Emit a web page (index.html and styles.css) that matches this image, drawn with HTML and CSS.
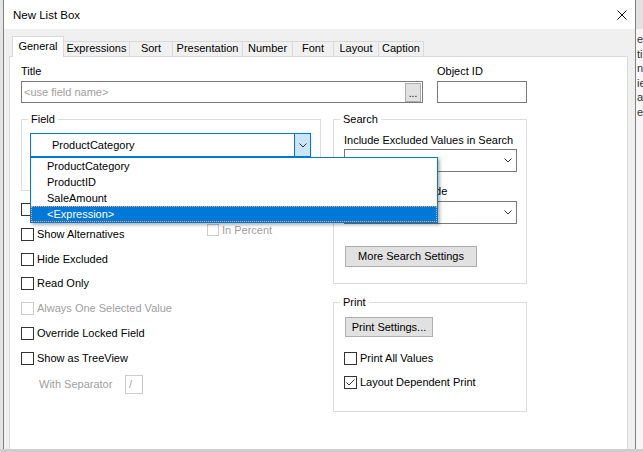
FILE: index.html
```html
<!DOCTYPE html>
<html>
<head>
<meta charset="utf-8">
<title>New List Box</title>
<link rel="stylesheet" href="styles.css">
</head>
<body>
<div class="screen">
  <div class="desk">
    <div class="edge-left"></div>
    <div class="dialog">
      <div class="titlebar">
        <span class="title">New List Box</span>
        <svg class="close" width="10" height="10" viewBox="0 0 10 10"><path d="M0.5 0.5L9.5 9.5M9.5 0.5L0.5 9.5" stroke="#111" stroke-width="1" fill="none"/></svg>
      </div>
      <div class="tabs">
        <div class="tab active t-general">General</div>
        <div class="tab t-expr">Expressions</div>
        <div class="tab t-sort">Sort</div>
        <div class="tab t-pres">Presentation</div>
        <div class="tab t-num">Number</div>
        <div class="tab t-font">Font</div>
        <div class="tab t-layout">Layout</div>
        <div class="tab t-caption">Caption</div>
      </div>
      <div class="panel">
        <div class="row-top">
          <div class="title-block">
            <div class="label">Title</div>
            <div class="input title-input">
              <span class="placeholder">&lt;use field name&gt;</span>
              <span class="dots">...</span>
            </div>
          </div>
          <div class="objid-block">
            <div class="label">Object ID</div>
            <div class="input"></div>
          </div>
        </div>
        <div class="row-main">
          <div class="col-left">
            <fieldset class="group field-group">
              <legend class="legend-field">Field</legend>
              <div class="combo combo-open">
                <span class="combo-text">ProductCategory</span>
                <span class="combo-btn"><svg width="8" height="5" viewBox="0 0 8 5"><path d="M0.5 0.5L4 4L7.5 0.5" stroke="#333" fill="none"/></svg></span>
                <div class="droplist">
                  <div class="item">ProductCategory</div>
                  <div class="item">ProductID</div>
                  <div class="item">SaleAmount</div>
                  <div class="item selected">&lt;Expression&gt;</div>
                </div>
              </div>
            </fieldset>
            <div class="checks">
              <div class="chk"><span class="box"></span><span>Show Frequency</span></div>
              <div class="chk-alt">
                <div class="chk-main"><span class="box"></span><span>Show Alternatives</span></div>
                <div class="chk-pct disabled"><span class="box"></span><span>In Percent</span></div>
              </div>
              <div class="chk"><span class="box"></span><span>Hide Excluded</span></div>
              <div class="chk"><span class="box"></span><span>Read Only</span></div>
              <div class="chk disabled"><span class="box"></span><span>Always One Selected Value</span></div>
              <div class="chk"><span class="box"></span><span>Override Locked Field</span></div>
              <div class="chk"><span class="box"></span><span>Show as TreeView</span></div>
              <div class="sep-row disabled">
                <span class="sep-label">With Separator</span>
                <span class="sep-input">/</span>
              </div>
            </div>
          </div>
          <div class="col-right">
            <fieldset class="group search-group">
              <legend class="legend-right">Search</legend>
              <div class="label">Include Excluded Values in Search</div>
              <div class="combo combo-plain c1">
                <span class="combo-text">Use Default</span>
                <span class="combo-btn"><svg width="8" height="5" viewBox="0 0 8 5"><path d="M0.5 0.5L4 4L7.5 0.5" stroke="#333" fill="none"/></svg></span>
              </div>
              <div class="label l2">Default Search Mode</div>
              <div class="combo combo-plain c2">
                <span class="combo-text">Use Default</span>
                <span class="combo-btn"><svg width="8" height="5" viewBox="0 0 8 5"><path d="M0.5 0.5L4 4L7.5 0.5" stroke="#333" fill="none"/></svg></span>
              </div>
              <div class="button btn-more">More Search Settings</div>
            </fieldset>
            <fieldset class="group print-group">
              <legend class="legend-right">Print</legend>
              <div class="button btn-print">Print Settings...</div>
              <div class="chk pchk1"><span class="box"></span><span>Print All Values</span></div>
              <div class="chk pchk2"><span class="box"><svg width="11" height="11" viewBox="0 0 11 11"><path d="M1.5 5.5L4 8L9.5 2.5" stroke="#333" fill="none"/></svg></span><span>Layout Dependent Print</span></div>
            </fieldset>
          </div>
        </div>
      </div>
    </div>
    <div class="edge-right">
      <div class="frag">er</div>
      <div class="frag">ti</div>
      <div class="frag">n</div>
      <div class="frag">ie</div>
      <div class="frag">ay</div>
      <div class="frag">e</div>
    </div>
  </div>
  <div class="taskbar"></div>
</div>
</body>
</html>
```

FILE: styles.css
```css
* { box-sizing: border-box; }
html, body { margin: 0; padding: 0; }
body {
  width: 643px;
  height: 452px;
  overflow: hidden;
  background: #f0f0f0;
  font-family: "Liberation Sans", Arial, sans-serif;
  font-size: 11px;
  color: #000;
}
.screen { display: flex; flex-direction: column; height: 452px; }
.desk { display: flex; height: 449px; }
.edge-left { width: 3px; background: #e4e4e4; }
.dialog {
  width: 633px;
  border-left: 1px solid #808080;
  border-right: 1px solid #808080;
  background: #f0f0f0;
  display: flex;
  flex-direction: column;
}
.edge-right {
  flex: 1;
  background: #f6f6f6;
  border-top: 29px solid #e2e2e2;
  padding-top: 3px;
  overflow: hidden;
  color: #333;
  font-size: 11px;
  line-height: 14.5px;
  padding-left: 1px;
}
.taskbar { height: 3px; background: #cdcdcd; }

.titlebar {
  height: 29px;
  background: #fff;
  display: flex;
  align-items: center;
  padding-left: 9px;
  padding-right: 8px;
}
.title { line-height: 14px; font-size: 11.5px; }
.close { margin-left: auto; display: block; }

.tabs {
  display: flex;
  align-items: flex-end;
  padding: 7px 0 0 8px;
  height: 27px;
}
.tab {
  height: 15px;
  line-height: 13px;
  text-align: center;
  border-top: 1px solid #d9d9d9;
  border-right: 1px solid #d9d9d9;
  background: #f0f0f0;
  white-space: nowrap;
}
.tab.active {
  height: 21px;
  margin-bottom: -1px;
  padding-top: 2px;
  line-height: 14px;
  border-left: 1px solid #d9d9d9;
  background: #fff;
  position: relative;
  z-index: 2;
}
.t-general { width: 52px; }
.t-expr { width: 66px; }
.t-sort { width: 43px; }
.t-pres { width: 70px; }
.t-num { width: 50px; }
.t-font { width: 41px; }
.t-layout { width: 45px; }
.t-caption { width: 45px; }

.panel {
  flex: 1;
  margin: 0 7px 0 5px;
  background: #fff;
  border: 1px solid #d9d9d9;
  border-bottom: none;
  padding: 7px 0 0 11px;
}
.label { line-height: 14px; height: 14px; white-space: nowrap; }
.row-top { display: flex; gap: 14px; }
.row-top .label { margin-bottom: 3px; }
.title-block { width: 402px; }
.objid-block { width: 90px; }
.input {
  height: 22px;
  border: 1px solid #7a7a7a;
  background: #fff;
}
.title-input {
  display: flex;
  align-items: center;
  padding: 1px;
}
.placeholder { flex: 1; color: #a0a0a0; padding-left: 1px; line-height: 14px; }
.dots {
  width: 16px;
  height: 19px;
  background: #e1e1e1;
  border: 1px solid #adadad;
  line-height: 17px;
  text-align: center;
  font-size: 10px;
  padding-top: 1px;
}

.row-main { display: flex; gap: 12px; margin-top: 9px; }
.col-left { width: 300px; }
.col-right { width: 194px; }

.group {
  margin: 0;
  min-width: 0;
  border: 1px solid #dcdcdc;
}
.group legend { line-height: 15px; padding: 0 3px; }
.legend-field { margin-left: -2px; }
.legend-right { margin-left: -4px; }
.field-group { padding: 6px 9px 33px 8px; }

.combo {
  position: relative;
  display: flex;
  align-items: center;
  background: #fff;
}
.combo-open {
  height: 24px;
  border: 1px solid #0078d7;
}
.combo-text { flex: 1; white-space: nowrap; overflow: hidden; line-height: 14px; }
.combo-open .combo-text { padding-left: 21px; }
.combo-btn {
  display: flex;
  align-items: center;
  justify-content: center;
  align-self: stretch;
}
.combo-btn svg { display: block; }
.combo-open .combo-btn {
  width: 16px;
  border-left: 1px solid #0078d7;
  background: #cce4f7;
}
.droplist {
  position: absolute;
  left: -1px;
  top: calc(100% + 1px);
  width: 408px;
  border: 1px solid #0078d7;
  background: #fff;
  box-shadow: 2px 2px 3px rgba(0,0,0,0.3);
  z-index: 10;
}
.item {
  height: 16px;
  line-height: 16px;
  padding-left: 16px;
  white-space: nowrap;
}
.item.selected {
  background: #0078d7;
  color: #fff;
  outline: 1px dotted #ffa552;
  outline-offset: -1px;
}

.checks { margin-top: 12px; }
.chk {
  display: flex;
  align-items: center;
  gap: 3px;
  height: 13px;
  line-height: 13px;
  white-space: nowrap;
}
.checks > * + * { margin-top: 11.83px; }
.box {
  width: 13px;
  height: 13px;
  border: 1px solid #333;
  background: #fff;
  flex: none;
  display: flex;
  align-items: center;
  justify-content: center;
}
.box svg { display: block; }
.disabled { color: #a0a0a0; }
.disabled .box { border-color: #cccccc; }
.chk-alt {
  display: grid;
  grid-template-columns: 186px auto;
  height: 13px;
  line-height: 13px;
  white-space: nowrap;
}
.chk-main, .chk-pct { display: flex; align-items: center; gap: 3px; }
.chk-pct { margin-top: -4px; align-self: start; }
.chk-pct .box { width: 12px; height: 12px; }
.checks > .sep-row { margin-top: 10px; }
.sep-row {
  display: flex;
  align-items: center;
  padding-left: 18px;
  height: 19px;
}
.sep-label { width: 86px; }
.sep-input {
  width: 18px;
  height: 19px;
  border: 1px solid #cccccc;
  padding-left: 3px;
  line-height: 17px;
}

.search-group { padding: 6px 9px 16px 10px; }
.combo-plain {
  height: 23px;
  border: 1px solid #7a7a7a;
}
.combo-plain .combo-text { padding-left: 4px; }
.combo-plain .combo-btn { width: 17px; }
.c1 { margin-top: 2px; }
.l2 { margin-top: 12px; }
.c2 { margin-top: 3px; }
.button {
  background: #e1e1e1;
  border: 1px solid #adadad;
  text-align: center;
  white-space: nowrap;
}
.btn-more {
  margin: 22px 0 0 1px;
  width: 132px;
  height: 21px;
  line-height: 19px;
}
.print-group { margin-top: 11px; padding: 7px 9px 22px 10px; }
.btn-print {
  margin-left: 1px;
  width: 88px;
  height: 20px;
  line-height: 18px;
}
.pchk1 { margin-top: 15px; }
.pchk2 { margin-top: 11px; }
```
